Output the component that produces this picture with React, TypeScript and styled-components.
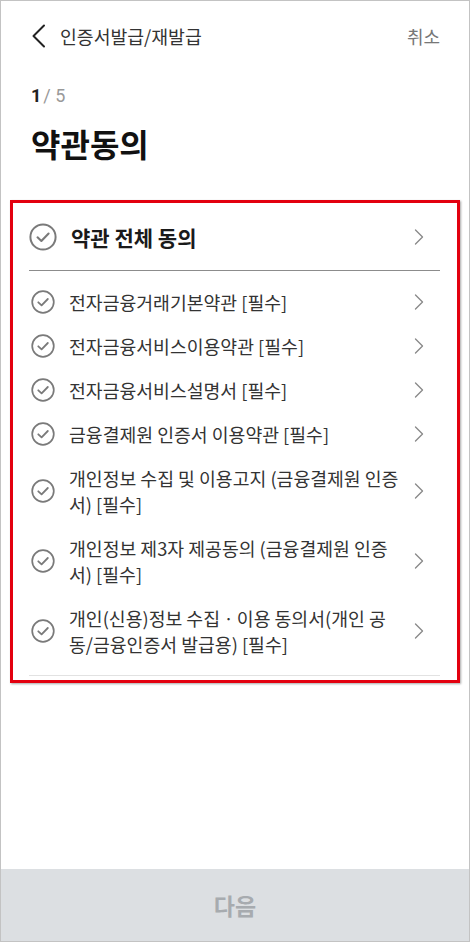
import styled, { createGlobalStyle } from "styled-components";

const GlobalStyle = createGlobalStyle`
  html, body {
    margin: 0;
    padding: 0;
    background: #ffffff;
  }
  body {
    font-family: "Noto Sans CJK KR", "Noto Sans", sans-serif;
    color: #222222;
  }
  * {
    box-sizing: border-box;
  }
`;

const Screen = styled.div`
  width: 470px;
  height: 942px;
  border: 1px solid #c3c3c3;
  display: flex;
  flex-direction: column;
  background: #ffffff;
`;

const Header = styled.header`
  height: 70px;
  padding: 0 29px 0 30px;
  display: flex;
  align-items: center;
  justify-content: space-between;
`;

const HeaderLeft = styled.div`
  display: flex;
  align-items: center;
  gap: 13px;
`;

const HeaderTitle = styled.h1`
  margin: 0;
  font-size: 18.3px;
  font-weight: 400;
  line-height: 24px;
  color: #333333;
`;

const CancelButton = styled.button`
  border: none;
  background: none;
  padding: 0;
  font-family: inherit;
  font-size: 18px;
  line-height: 24px;
  color: #777777;
`;

const Step = styled.div`
  margin: 13px 0 0 30px;
  font-family: "Roboto", "Noto Sans CJK KR", sans-serif;
  font-size: 18px;
  line-height: 24px;
  color: #999999;

  strong {
    color: #222222;
    font-weight: 700;
    margin-right: 2px;
  }
`;

const PageTitle = styled.h2`
  margin: 15px 0 0 30px;
  font-size: 32px;
  font-weight: 700;
  line-height: 40px;
  color: #111111;
`;

const TermsBox = styled.section`
  margin: 37px 9px 0;
  border: 3px solid #e3000f;
  box-shadow: 1px 1px 2px rgba(0, 0, 0, 0.35);
  padding: 0 17px 4px 16px;
`;

const Row = styled.div<{ $all?: boolean }>`
  display: flex;
  align-items: center;
  padding: ${(p) => (p.$all ? "0" : "9px 0")};
  height: ${(p) => (p.$all ? "67px" : "auto")};
`;

const CheckSlot = styled.div<{ $all?: boolean }>`
  width: ${(p) => (p.$all ? "42px" : "40px")};
  padding-left: ${(p) => (p.$all ? "0" : "2px")};
  flex-shrink: 0;
  display: flex;
  align-items: center;
`;

const Label = styled.span<{ $all?: boolean }>`
  flex: 1;
  font-size: ${(p) => (p.$all ? "21px" : "18.3px")};
  font-weight: ${(p) => (p.$all ? 700 : 400)};
  line-height: 26px;
  color: ${(p) => (p.$all ? "#1a1a1a" : "#333333")};
  padding-right: 8px;
  white-space: nowrap;
`;

const LabelLine = styled.span`
  display: block;
`;

const ChevronSlot = styled.div`
  width: 26px;
  flex-shrink: 0;
  display: flex;
  justify-content: flex-start;
  align-items: center;
`;

const Divider = styled.div<{ $strong?: boolean }>`
  height: 1px;
  background: ${(p) => (p.$strong ? "#8c8c8c" : "#e2e2e2")};
`;

const List = styled.div`
  padding: 9px 0;
`;

const Spacer = styled.div`
  flex: 1;
`;

const NextButton = styled.button`
  height: 72px;
  border: none;
  background: #dcdfe2;
  color: #a7abaf;
  font-family: inherit;
  font-size: 23px;
  font-weight: 700;
`;

function BackIcon() {
  return (
    <svg width="16" height="24" viewBox="0 0 16 24" fill="none">
      <path d="M13 1.5 L2.5 12 L13 22.5" stroke="#222" strokeWidth="2" strokeLinecap="round" strokeLinejoin="round" />
    </svg>
  );
}

function CheckIcon({ size }: { size: number }) {
  return (
    <svg width={size} height={size} viewBox="0 0 24 24" fill="none">
      <circle cx="12" cy="12" r="10.8" stroke="#7a7a7a" strokeWidth="1.7" />
      <path d="M7.3 12.3 L10.6 15.4 L16.8 9" stroke="#7a7a7a" strokeWidth="1.8" strokeLinecap="round" strokeLinejoin="round" />
    </svg>
  );
}

function ChevronIcon() {
  return (
    <svg width="10" height="18" viewBox="0 0 10 18" fill="none">
      <path d="M1.5 2 L8.5 9 L1.5 16" stroke="#8a8a8a" strokeWidth="1.4" strokeLinecap="round" strokeLinejoin="round" />
    </svg>
  );
}

// each term is stored as the lines it is shown on
const terms: string[][] = [
  ["전자금융거래기본약관 [필수]"],
  ["전자금융서비스이용약관 [필수]"],
  ["전자금융서비스설명서 [필수]"],
  ["금융결제원 인증서 이용약관 [필수]"],
  ["개인정보 수집 및 이용고지 (금융결제원 인증", "서) [필수]"],
  ["개인정보 제3자 제공동의 (금융결제원 인증", "서) [필수]"],
  ["개인(신용)정보 수집ㆍ이용 동의서(개인 공", "동/금융인증서 발급용) [필수]"],
];

export default function App() {
  return (
    <>
      <GlobalStyle />
      <Screen>
        <Header>
          <HeaderLeft>
            <BackIcon />
            <HeaderTitle>인증서발급/재발급</HeaderTitle>
          </HeaderLeft>
          <CancelButton>취소</CancelButton>
        </Header>

        <Step>
          <strong>1</strong>/ 5
        </Step>
        <PageTitle>약관동의</PageTitle>

        <TermsBox>
          <Row $all>
            <CheckSlot $all>
              <CheckIcon size={28} />
            </CheckSlot>
            <Label $all>약관 전체 동의</Label>
            <ChevronSlot>
              <ChevronIcon />
            </ChevronSlot>
          </Row>
          <Divider $strong />
          <List>
            {terms.map((lines) => (
              <Row key={lines.join("")}>
                <CheckSlot>
                  <CheckIcon size={24} />
                </CheckSlot>
                <Label>
                  {lines.map((l) => (
                    <LabelLine key={l}>{l}</LabelLine>
                  ))}
                </Label>
                <ChevronSlot>
                  <ChevronIcon />
                </ChevronSlot>
              </Row>
            ))}
          </List>
          <Divider />
        </TermsBox>

        <Spacer />
        <NextButton>다음</NextButton>
      </Screen>
    </>
  );
}
